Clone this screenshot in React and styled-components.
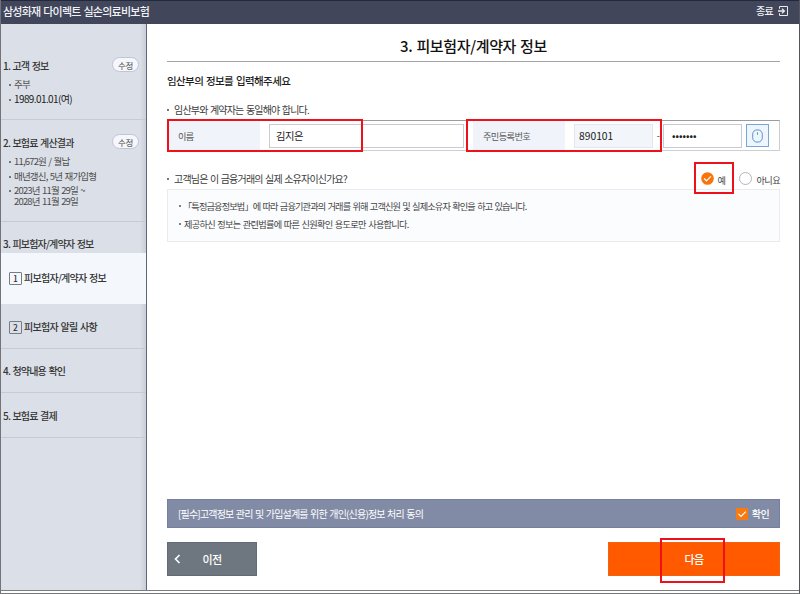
import React from 'react'
import styled, { createGlobalStyle } from 'styled-components'

const GlobalStyle = createGlobalStyle`
  * {
    box-sizing: border-box;
  }
  body {
    margin: 0;
    background: #fff;
    font-family: "Noto Sans CJK KR", "Noto Sans", sans-serif;
    letter-spacing: -0.82px;
    word-spacing: 1px;
    white-space: nowrap;
    color: #333;
  }
  button, input {
    font: inherit;
    letter-spacing: inherit;
  }
`;

const Window = styled.div`
  width: 800px;
  height: 594px;
  display: flex;
  flex-direction: column;
  overflow: hidden;
  padding-bottom: 2px;
  border-left: 1px solid #737479;
  border-right: 1px solid #55565b;
  border-bottom: 1px solid #77787c;
`;

const Header = styled.header`
  display: flex;
  justify-content: space-between;
  align-items: center;
  flex: 0 0 24px;
  padding: 0 11px 4px 2px;
  border-top: 1px solid #23283c;
  background: #41465b;
  color: #f2f3f6;
  font-size: 11px;
  font-weight: 500;
  line-height: 16px;
  letter-spacing: -0.75px;
`;

const Exit = styled.div`
  display: flex;
  align-items: center;
  gap: 5px;
  font-size: 10px;
  line-height: 16px;
`;

const Body = styled.div`
  flex: 1;
  display: flex;
  min-height: 0;
  border-bottom: 1px solid #7c7d81;
`;

const Sidebar = styled.nav`
  width: 146px;
  background: linear-gradient(90deg, #dbdfe7 139px, #c9ced8);
  border-right: 1px solid #5f6675;
`;

const Step = styled.section`
  height: ${props => props.$height}px;
  padding-top: ${props => props.$top}px;
  border-bottom: ${props => props.$open ? 'none' : '1px solid #c6cad3'};
`;

const StepHead = styled.div`
  display: flex;
  justify-content: space-between;
  align-items: flex-start;
  padding: 0 7px 0 2px;
  font-size: 10px;
  font-weight: 500;
  line-height: 16px;
`;

const EditButton = styled.button`
  width: 27px;
  height: 15px;
  margin-top: -1px;
  padding: 0;
  border: 1px solid #bfc4d6;
  border-radius: 8px;
  background: #f5f7fc;
  color: #444;
  font-size: 8.5px;
  font-weight: 400;
  letter-spacing: -0.3px;
  line-height: 12px;
`;

const Details = styled.ul`
  list-style: none;
  margin: ${props => props.$top}px 0 0;
  padding: 0 0 0 13px;
  font-size: 9.5px;
  line-height: 14.5px;
  color: #4c4c4c;
`;

const Detail = styled.li`
  line-height: ${props => props.$tight ? '11px' : 'inherit'};
  padding-top: ${props => props.$tight ? '2px' : 0};
  color: ${props => props.$strong ? '#222' : 'inherit'};
  font-size: ${props => props.$strong ? '10px' : 'inherit'};
  letter-spacing: ${props => props.$strong ? '-0.6px' : 'inherit'};
  &::before {
    content: "";
    float: left;
    width: 2px;
    height: 2px;
    margin: ${props => props.$tight ? '5px' : '7px'} 0 0 -5px;
    border-radius: 1px;
    background: #555;
  }
`;

const SubStep = styled.div`
  display: flex;
  align-items: center;
  gap: 2px;
  height: ${props => props.$active ? 51 : 45}px;
  padding-left: 8px;
  padding-top: ${props => props.$active ? 0 : 1}px;
  padding-bottom: ${props => props.$active ? 2 : 0}px;
  border-bottom: ${props => props.$active ? 'none' : '1px solid #c6cad3'};
  background: ${props => props.$active ? '#f4f7fc' : 'none'};
  font-size: 10px;
  font-weight: 500;
  line-height: 16px;
  letter-spacing: -0.72px;
`;

const StepNumber = styled.span`
  width: 13px;
  height: 13px;
  margin-top: 2px;
  border: 1px solid #777b84;
  border-radius: 1px;
  font-size: 8.5px;
  line-height: 10px;
  letter-spacing: 0;
  text-align: center;
`;

const Main = styled.main`
  flex: 1;
  display: flex;
  flex-direction: column;
  padding: 0 19px 14px 20px;
  background: #fff;
`;

const Title = styled.h1`
  flex: 0 0 38px;
  margin: 0;
  padding-top: 10px;
  border-bottom: 1px solid #a4a4a8;
  color: #111;
  font-size: 15px;
  font-weight: 500;
  line-height: 24px;
  letter-spacing: -0.35px;
  text-align: center;
`;

const Heading = styled.h2`
  margin: 11px 0 13px;
  color: #1d1d1d;
  font-size: 10.5px;
  font-weight: 500;
  line-height: 16px;
  letter-spacing: -0.6px;
`;

const Note = styled.p`
  display: flex;
  align-items: center;
  gap: 5px;
  margin: 0;
  font-size: 10px;
  line-height: 16px;
  color: #3c3c3c;
  &::before {
    content: "";
    width: 2px;
    height: 2px;
    background: #777;
  }
`;

const Fields = styled.div`
  display: flex;
  align-items: center;
  height: 31px;
  margin-top: 2px;
  border: 1px solid #ccced2;
  border-top-color: #9c9c9f;
`;

const Label = styled.label`
  align-self: stretch;
  display: flex;
  align-items: center;
  width: 92px;
  margin-left: ${props => props.$offset || 0}px;
  margin-right: 9px;
  padding-left: 10px;
  background: #f0f3fa;
  color: #555;
  font-size: 9.2px;
  line-height: 14px;
  letter-spacing: -0.6px;
`;

const Field = styled.input`
  width: ${props => props.$width}px;
  height: 24px;
  padding: 0 0 1px ${props => props.$indent}px;
  border: 1px solid ${props => props.readOnly ? '#e2e6ee' : '#c9cbd1'};
  border-radius: 0;
  outline: none;
  background: ${props => props.readOnly ? '#f2f5fa' : '#fff'};
  color: #222;
  font-size: 10.3px;
  letter-spacing: ${props => props.$spacing || 0}px;
`;

const Dash = styled.span`
  width: 10px;
  text-align: center;
  font-size: 9px;
`;

const MouseButton = styled.button`
  display: grid;
  place-items: center;
  width: 23px;
  height: 23px;
  margin-left: 4px;
  padding: 0;
  border: 1px solid #7ba5d2;
  background: #edf5fd;
`;

// Red outline that points the reader at a part of the form
const Highlight = styled.div`
  position: absolute;
  left: ${props => props.$x}px;
  top: ${props => props.$y}px;
  width: ${props => props.$w}px;
  height: ${props => props.$h}px;
  border: 2px solid #ec111b;
  pointer-events: none;
`;

const Marked = styled.div`
  position: relative;
`;

const Question = styled.div`
  display: flex;
  justify-content: space-between;
  height: 38px;
  padding-top: 18px;
`;

const Answers = styled.div`
  display: flex;
  align-items: center;
  height: 20px;
  margin-top: -1px;
  font-size: 9.2px;
  line-height: 14px;
  letter-spacing: -0.6px;
  color: #444;
`;

const Answer = styled.label`
  display: flex;
  align-items: center;
  gap: 4px;
  margin-left: 14px;
`;

const AnswerText = styled.span`
  padding-top: 3px;
`;

const Notice = styled.ul`
  list-style: none;
  height: 53px;
  margin: 0;
  padding: 7px 0 0 16px;
  border: 1px solid #e9ebef;
  background: #fbfcfe;
  color: #444;
  font-size: 9.2px;
  line-height: 18px;
`;

const NoticeItem = styled.li`
  letter-spacing: ${props => props.$spacing}px;
  text-indent: ${props => props.$indent || 0}px;
  &::before {
    content: "";
    float: left;
    width: 2px;
    height: 2px;
    margin: 8px 0 0 -5px;
    border-radius: 1px;
    background: #555;
  }
`;

const Consent = styled.div`
  display: flex;
  justify-content: space-between;
  align-items: center;
  height: 29px;
  margin-top: auto;
  padding: 0 10px 0 10px;
  border: 1px solid #77809b;
  background: #828ba5;
  color: #fff;
  font-size: 10px;
  line-height: 16px;
`;

const Confirm = styled.div`
  display: flex;
  align-items: center;
  gap: 4px;
  font-weight: 500;
  letter-spacing: -0.6px;
`;

const Actions = styled.div`
  display: flex;
  justify-content: space-between;
  margin-top: 14px;
`;

const ActionButton = styled.button`
  position: relative;
  display: flex;
  align-items: center;
  justify-content: center;
  width: ${props => props.$primary ? 172 : 90}px;
  height: 34px;
  padding: 0;
  border: 1px solid ${props => props.$primary ? '#f06414' : '#626b74'};
  background: ${props => props.$primary ? '#ff5a00' : '#6e7780'};
  color: #fff;
  font-size: 11px;
  font-weight: 500;
  letter-spacing: -0.5px;
  svg {
    position: absolute;
    left: 6px;
  }
`;

function ExitIcon() {
  return (
    <svg width="10" height="10" viewBox="0 0 10 10" fill="none" stroke="#e9eaee" strokeWidth="1">
      <path d="M1.5 2.8V.5h8v9h-8V7.2" />
      <path d="M0 5h6M4 2.6 6.4 5 4 7.4" strokeWidth="1.3" />
    </svg>
  )
}

function MouseIcon() {
  return (
    <svg width="11" height="14" viewBox="0 0 11 14" fill="none" stroke="#6292c8">
      <rect x=".7" y=".9" width="9.6" height="12.2" rx="4.3" />
      <path d="M5.5 3.3v2.5" />
    </svg>
  )
}

function RadioIcon({ checked }) {
  return (
    <svg width="13" height="13" viewBox="0 0 13 13" fill="none">
      <circle cx="6.5" cy="6.5" r={checked ? 6.3 : 6} fill={checked ? '#f9730c' : '#fff'} stroke={checked ? 'none' : '#b3b4b9'} />
      {checked && <path d="m3.1 6.5 2.4 2.3 4.4-4.4" stroke="#fff" strokeWidth="1.2" />}
    </svg>
  )
}

function CheckIcon() {
  return (
    <svg width="12" height="12" viewBox="0 0 12 12" fill="none">
      <rect width="12" height="12" fill="#f97a10" />
      <path d="m2.4 5.8 2.6 2.6 4.8-4.8" stroke="#fff" strokeWidth="1.2" />
    </svg>
  )
}

function Steps() {
  return (
    <Sidebar>
      <Step $height={96} $top={34}>
        <StepHead>1. 고객 정보<EditButton>수정</EditButton></StepHead>
        <Details $top={3}>
          <Detail>주부</Detail>
          <Detail $strong>1989.01.01(여)</Detail>
        </Details>
      </Step>
      <Step $height={102} $top={15}>
        <StepHead>2. 보험료 계산결과<EditButton>수정</EditButton></StepHead>
        <Details $top={3}>
          <Detail>11,672원 / 월납</Detail>
          <Detail>매년갱신, 5년 재가입형</Detail>
          <Detail $tight>2023년 11월 29일 ~<br />2028년 11월 29일</Detail>
        </Details>
      </Step>
      <Step $height={31} $top={14} $open>
        <StepHead>3. 피보험자/계약자 정보</StepHead>
      </Step>
      <SubStep $active><StepNumber>1</StepNumber>피보험자/계약자 정보</SubStep>
      <SubStep><StepNumber>2</StepNumber>피보험자 알릴 사항</SubStep>
      <Step $height={44} $top={14}>
        <StepHead>4. 청약내용 확인</StepHead>
      </Step>
      <Step $height={45} $top={15}>
        <StepHead>5. 보험료 결제</StepHead>
      </Step>
    </Sidebar>
  )
}

function App() {
  return (
    <Window>
      <GlobalStyle />
      <Header>
        <span>삼성화재 다이렉트 실손의료비보험</span>
        <Exit>종료<ExitIcon /></Exit>
      </Header>
      <Body>
        <Steps />
        <Main>
          <Title>3. 피보험자/계약자 정보</Title>
          <Heading>임산부의 정보를 입력해주세요</Heading>
          <Note>임산부와 계약자는 동일해야 합니다.</Note>
          <Marked>
            <Fields>
              <Label>이름</Label>
              <Field $width={195} $indent={6} $spacing={-0.5} defaultValue="김지은" />
              <Label $offset={9}>주민등록번호</Label>
              <Field $width={79} $indent={4} readOnly value="890101" />
              <Dash>-</Dash>
              <Field $width={79} $indent={8} type="password" defaultValue="0000000" />
              <MouseButton><MouseIcon /></MouseButton>
            </Fields>
            <Highlight $x={0} $y={1} $w={196} $h={33} />
            <Highlight $x={299} $y={1} $w={196} $h={33} />
          </Marked>
          <Marked>
            <Question>
              <Note>고객님은 이 금융거래의 실제 소유자이신가요?</Note>
              <Answers>
                <Answer><RadioIcon checked /><AnswerText>예</AnswerText></Answer>
                <Answer><RadioIcon /><AnswerText>아니요</AnswerText></Answer>
              </Answers>
            </Question>
            <Highlight $x={527} $y={11} $w={40} $h={32} />
          </Marked>
          <Notice>
            <NoticeItem $spacing={-0.87} $indent={-1}>「특정금융정보법」에 따라 금융기관과의 거래를 위해 고객신원 및 실제소유자 확인을 하고 있습니다.</NoticeItem>
            <NoticeItem $spacing={-0.72}>제공하신 정보는 관련법률에 따른 신원확인 용도로만 사용합니다.</NoticeItem>
          </Notice>
          <Consent>
            <span>[필수]고객정보 관리 및 가입설계를 위한 개인(신용)정보 처리 동의</span>
            <Confirm><CheckIcon />확인</Confirm>
          </Consent>
          <Actions>
            <ActionButton>
              <svg width="7" height="10" viewBox="0 0 7 10" fill="none" stroke="#fff" strokeWidth="1.6"><path d="M5.5 1 1.5 5l4 4" /></svg>
              이전
            </ActionButton>
            <ActionButton $primary>
              다음
              <Highlight $x={51} $y={-5} $w={65} $h={45} />
            </ActionButton>
          </Actions>
        </Main>
      </Body>
    </Window>
  )
}

export default App
